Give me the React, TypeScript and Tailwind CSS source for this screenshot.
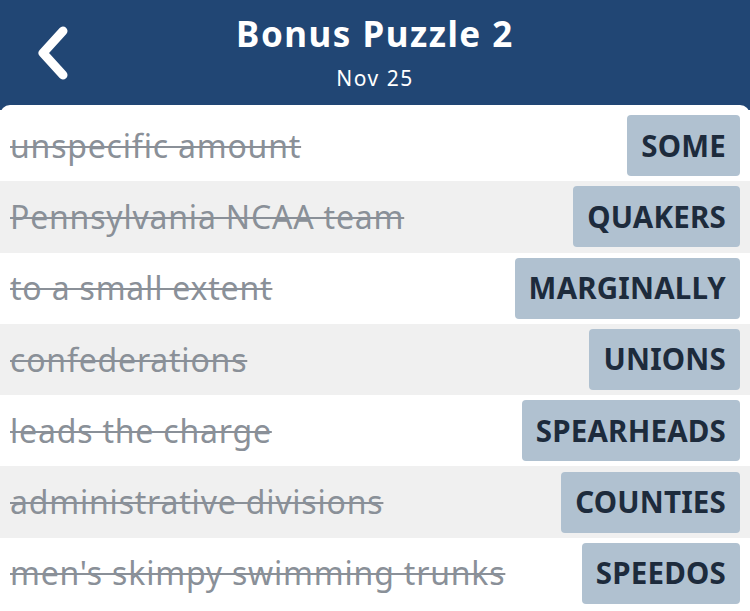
const clues = [
  { clue: "unspecific amount", answer: "SOME" },
  { clue: "Pennsylvania NCAA team", answer: "QUAKERS" },
  { clue: "to a small extent", answer: "MARGINALLY" },
  { clue: "confederations", answer: "UNIONS" },
  { clue: "leads the charge", answer: "SPEARHEADS" },
  { clue: "administrative divisions", answer: "COUNTIES" },
  { clue: "men's skimpy swimming trunks", answer: "SPEEDOS" },
];

const App = () => {
  return (
    <div className="h-[611px] w-[750px] overflow-hidden bg-[#214674] font-['Noto_Sans',sans-serif]">
      <header className="relative flex h-[105px] flex-col items-center pt-[9px]">
        <button className="absolute left-[33px] top-[25px] text-white">
          <svg width="40" height="56" viewBox="0 0 40 56" fill="none">
            <path
              d="M30 6 L10 28 L30 50"
              stroke="white"
              strokeWidth="9"
              strokeLinecap="round"
              strokeLinejoin="round"
            />
          </svg>
        </button>
        <h1 className="text-[35px] font-bold leading-[50px] tracking-[1.5px] text-white">
          Bonus Puzzle 2
        </h1>
        <span className="mt-[4px] text-[21px] leading-[30px] tracking-[1.5px] text-white">
          Nov 25
        </span>
      </header>
      <ul className="h-[506px] rounded-t-[10px] bg-white pt-[5px]">
        {clues.map((c, i) => (
          <li
            key={c.answer}
            className={`flex h-[71.3px] items-center justify-between pl-[10px] pr-[10px] ${
              i % 2 === 1 ? "bg-[#f0f0f0]" : "bg-white"
            }`}
          >
            <span className="text-[32px] tracking-[0.8px] text-[#8a9098] line-through decoration-[2px]">
              {c.clue}
            </span>
            <span className="flex h-[61px] items-center rounded-[4px] bg-[#b0c1d0] px-[14px] text-[29.5px] font-bold tracking-[0.2px] text-[#1d2b3c]">
              {c.answer}
            </span>
          </li>
        ))}
      </ul>
    </div>
  );
};

export default App;
